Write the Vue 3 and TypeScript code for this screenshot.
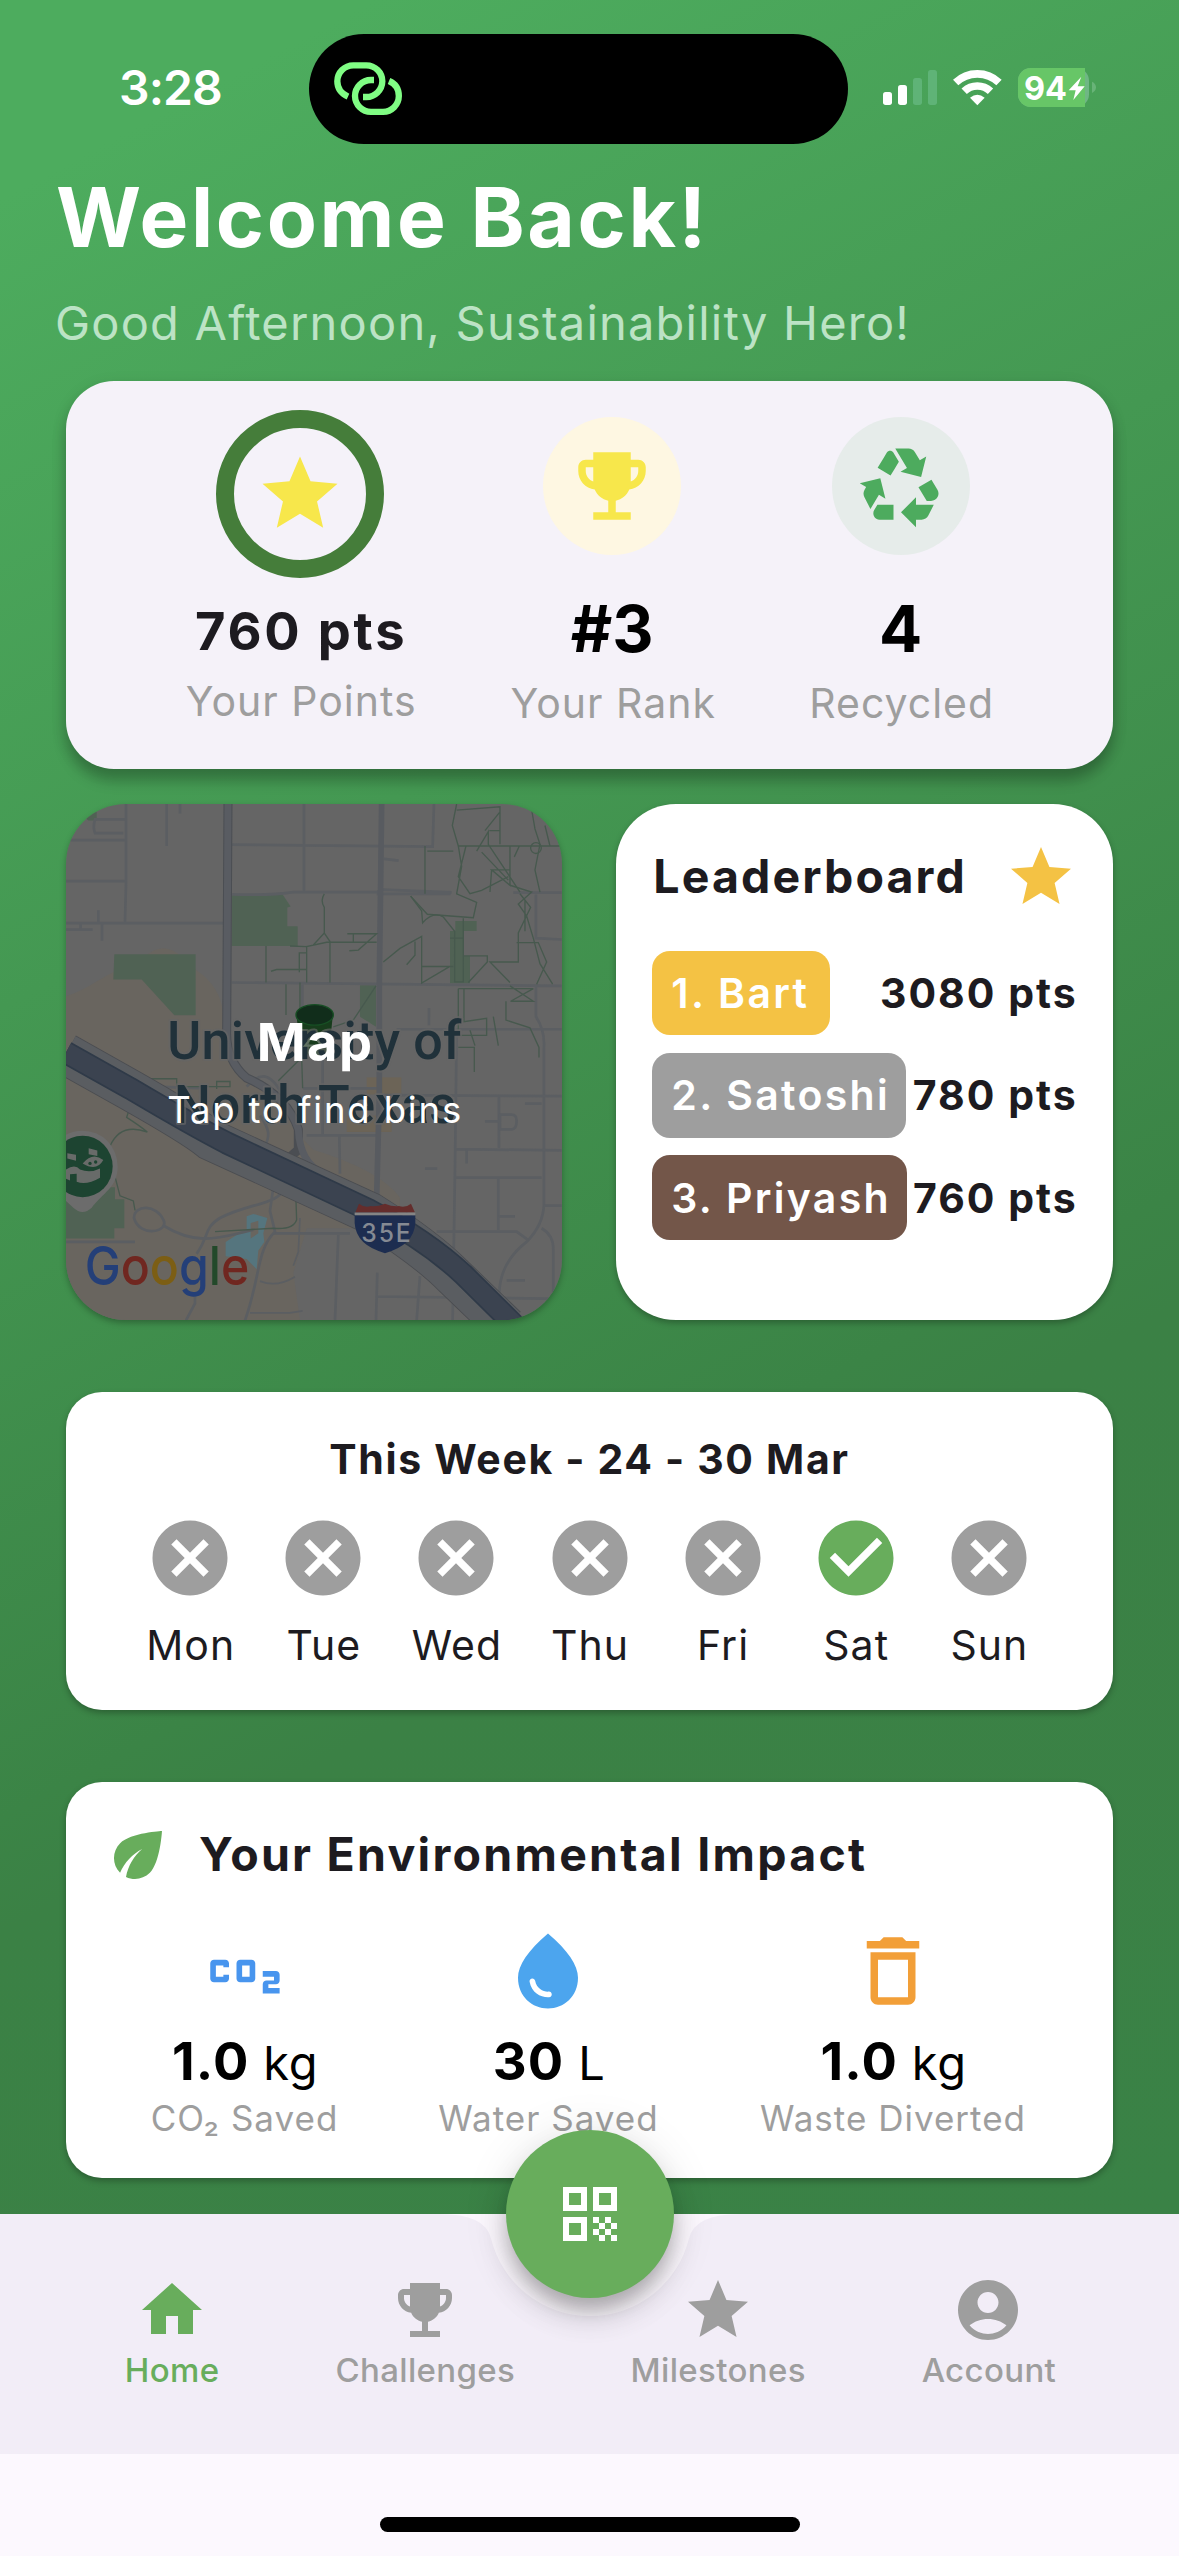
<script setup lang="ts">
interface Leader { label: string; points: string; color: string }
interface Day { name: string; done: boolean }
interface Tab { name: string; icon: string; active: boolean }

const icons = {
  star: 'M12 17.27L18.18 21l-1.64-7.03L22 9.24l-7.19-.61L12 2 9.19 8.63 2 9.24l5.46 4.73L5.82 21z',
  trophy: 'M19 5h-2V3H7v2H5c-1.1 0-2 .9-2 2v1c0 2.55 1.92 4.63 4.39 4.94.63 1.5 1.98 2.63 3.61 2.96V19H7v2h10v-2h-4v-3.1c1.63-.33 2.98-1.46 3.61-2.96C19.08 12.63 21 10.55 21 8V7c0-1.1-.9-2-2-2zM5 8V7h2v3.82C5.84 10.4 5 9.3 5 8zm14 0c0 1.3-.84 2.4-2 2.82V7h2v1z',
  recycling: 'M5.77 7.15L7.2 4.78l1.03-1.71c.39-.65 1.33-.65 1.72 0l1.48 2.46-1.23 2.06-1 1.62-3.43-2.06zm15.95 5.82l-1.6-2.66-3.46 2L18.87 16H20c.76 0 1.45-.43 1.79-1.11.14-.28.21-.58.21-.89 0-.36-.1-.71-.28-1.03zM16 21h1.5c.76 0 1.45-.43 1.79-1.11L20.74 17H16v-2l-4 4 4 4v-2zm-6-4H5.7l-.84 1.41c-.3.5-.32 1.12-.06 1.65.28.57.87.94 1.52.94H10v-4zm-3.88-2.65l1.73 1.04L6.48 9.9 1 11.27l1.7 1.02-.41.69c-.35.59-.38 1.31-.07 1.92l1.63 3.26 2.27-3.81zm10.9-9.21l-1.3-2.17C15.35 2.37 14.7 2 14 2h-3.53l3.12 5.2-1.72 1.03 5.49 1.37 1.37-5.49-1.71 1.03z',
  check: 'M12 2C6.48 2 2 6.48 2 12s4.48 10 10 10 10-4.48 10-10S17.52 2 12 2zm-2 15l-5-5 1.41-1.41L10 14.17l7.59-7.59L19 8l-9 9z',
  cancel: 'M12 2C6.47 2 2 6.47 2 12s4.47 10 10 10 10-4.47 10-10S17.53 2 12 2zm5 13.59L15.59 17 12 13.41 8.41 17 7 15.59 10.59 12 7 8.41 8.41 7 12 10.59 15.59 7 17 8.41 13.41 12 17 15.59z',
  eco: 'M6.05 8.05c-2.73 2.73-2.73 7.15-.02 9.88 1.47-3.4 4.09-6.24 7.36-7.93-2.77 2.34-4.71 5.61-5.39 9.32 2.6 1.23 5.8.78 7.95-1.37C19.43 14.47 20 4 20 4S9.53 4.57 6.05 8.05z',
  co2: 'M14 9h-3c-.55 0-1 .45-1 1v4c0 .55.45 1 1 1h3c.55 0 1-.45 1-1v-4c0-.55-.45-1-1-1zm-.5 4.5h-2v-3h2v3zM8 13v1c0 .55-.45 1-1 1H4c-.55 0-1-.45-1-1v-4c0-.55.45-1 1-1h3c.55 0 1 .45 1 1v1H6.5v-.5h-2v3h2V13H8zm12.5 2.5h-2v1h3V18H17v-2.5c0-.55.45-1 1-1h2v-1h-3V12h3.5c.55 0 1 .45 1 1v1.5c0 .55-.45 1-1 1z',
  water: 'M12 2c-5.33 4.55-8 8.48-8 11.8 0 4.98 3.8 8.2 8 8.2s8-3.22 8-8.2c0-3.32-2.67-7.25-8-11.8zM7.83 14c.37 0 .67.26.74.62.41 2.22 2.28 2.98 3.64 2.87.43-.02.79.32.79.75 0 .4-.32.73-.72.75-2.13.13-4.62-1.09-5.19-4.12-.08-.45.28-.87.74-.87z',
  bin: 'M6 19c0 1.1.9 2 2 2h8c1.1 0 2-.9 2-2V7H6v12zM8 9h8v10H8V9zm7.5-5l-1-1h-5l-1 1H5v2h14V4h-3.5z',
  qr: 'M3 11h8V3H3v8zm2-6h4v4H5V5zM3 21h8v-8H3v8zm2-6h4v4H5v-4zM13 3v8h8V3h-8zm6 6h-4V5h4v4zM19 19h2v2h-2zM13 13h2v2h-2zM15 15h2v2h-2zM13 17h2v2h-2zM15 19h2v2h-2zM17 17h2v2h-2zM17 13h2v2h-2zM19 15h2v2h-2z',
  home: 'M10 20v-6h4v6h5v-8h3L12 3 2 12h3v8z',
  account: 'M12 2C6.48 2 2 6.48 2 12s4.48 10 10 10 10-4.48 10-10S17.52 2 12 2zm0 4c1.93 0 3.5 1.57 3.5 3.5S13.93 13 12 13s-3.5-1.57-3.5-3.5S10.07 6 12 6zm0 14c-2.03 0-4.43-.82-6.14-2.88C7.55 15.8 9.68 15 12 15s4.45.8 6.14 2.12C16.43 19.18 14.03 20 12 20z',
}

const leaders: Leader[] = [
  { label: '1. Bart', points: '3080 pts', color: '#f4c244' },
  { label: '2. Satoshi', points: '780 pts', color: '#9e9e9e' },
  { label: '3. Priyash', points: '760 pts', color: '#735649' },
]

const days: Day[] = ['Mon', 'Tue', 'Wed', 'Thu', 'Fri', 'Sat', 'Sun'].map((name) => ({ name, done: name === 'Sat' }))

const tabs: Tab[] = [
  { name: 'Home', icon: icons.home, active: true },
  { name: 'Challenges', icon: icons.trophy, active: false },
  { name: 'Milestones', icon: icons.star, active: false },
  { name: 'Account', icon: icons.account, active: false },
]
</script>

<template>
  <div class="screen">
    <main class="body">
      <div class="status">
        <span class="time">3:28</span>
        <div class="island">
          <svg class="link" viewBox="102 126 204 159" fill="none" stroke="#80fd84" stroke-width="19">
            <path d="M144 230C124 221 112 204 112 184A48 48 0 0 1 160 136H199A48 48 0 0 1 247 184A48 48 0 0 1 199 231H189" />
            <path d="M222 180H213A48 48 0 0 0 165 228A48 48 0 0 0 213 275.500H249A48 48 0 0 0 296.500 228C296.500 208 286 191 267 183" />
          </svg>
        </div>
        <svg class="signals" viewBox="69 51 642 123">
          <rect x="69" y="126" width="27" height="39" rx="8" fill="#fff" />
          <rect x="114" y="105" width="27" height="60" rx="8" fill="#fff" />
          <rect x="159" y="84" width="27" height="81" rx="8" fill="#5fb377" />
          <rect x="204" y="60" width="27" height="105" rx="8" fill="#5fb377" />
          <g fill="none" stroke="#fff" stroke-width="23">
            <path d="M287 97.500A94 94 0 0 1 417 97.500" />
            <path d="M312.500 124A57 57 0 0 1 391.500 124" />
          </g>
          <path d="M330 143Q352 125 374 143L352 165.500Z" fill="#fff" />
          <rect x="474" y="54" width="213" height="117" rx="38" fill="#6fb784" />
          <path d="M512 54H675V171H512A38 38 0 0 1 474 133V92A38 38 0 0 1 512 54Z" fill="#67c667" />
          <path d="M696 95Q708 101 708 112T696 129Z" fill="#68b378" />
          <text x="492" y="149" class="battery-text" textLength="129" lengthAdjust="spacingAndGlyphs">94</text>
          <path d="M664 80L626 121H647L640 150L674 109H653Z" fill="#fff" />
        </svg>
      </div>

      <h1 class="welcome">Welcome Back!</h1>
      <p class="greeting">Good Afternoon, Sustainability Hero!</p>

      <section class="card stats">
        <div class="stat points">
          <div class="ring"><svg class="i90" viewBox="0 0 24 24" fill="#f7e74b"><path :d="icons.star" /></svg></div>
          <strong class="value small">760 pts</strong>
          <span class="label">Your Points</span>
        </div>
        <div class="stat">
          <div class="disc yellow"><svg class="i90" viewBox="0 0 24 24" fill="#f7e74b"><path :d="icons.trophy" /></svg></div>
          <strong class="value">#3</strong>
          <span class="label">Your Rank</span>
        </div>
        <div class="stat">
          <div class="disc mint"><svg class="i90" viewBox="0 0 24 24" fill="#4dab5e"><path :d="icons.recycling" /></svg></div>
          <strong class="value">4</strong>
          <span class="label">Recycled</span>
        </div>
      </section>

      <div class="pair">
        <section class="map">
          <svg class="map-art" viewBox="18 27 1489 1513" preserveAspectRatio="none">
            <rect x="18" y="27" width="1489" height="1513" fill="#656565" />
            <path fill="#69655f" d="M18 590C90 570 120 530 250 480Q310 420 370 480L410 515Q480 560 490 640V760L560 830L640 870L720 1000L760 1040Q960 1100 1020 1180V1270H740L700 1400L720 1540H18Z" />
            <g fill="#6c6457"><rect x="920" y="828" width="104" height="50" /><rect x="860" y="940" width="135" height="48" /></g>
            <g fill="#506254">
              <path d="M515 292H668L692 327L682 330V385H713V443H515Z" />
              <path d="M163 467H407V646H343L245 541H160Z" />
              <path d="M900 558H948V680L900 650Z" />
              <path d="M1186 370H1250V399H1210V472H1230V552H1170V399H1186Z" />
              <path d="M18 1150H165V1185H193V1270H163V1300H18Z" />
              <path d="M55 50H110V75H85Z" />
            </g>
            <path fill="#55757e" d="M497 1310L530 1290L560 1275V1235L580 1228L622 1240L610 1285L613 1310L595 1335L590 1390L560 1360L497 1352ZM572 1255V1300L595 1285V1248Z" fill-rule="evenodd" />
            <path d="M1225 1480L1242 1540" stroke="#55757e" stroke-width="14" />
            <g fill="none" stroke="#5b5e62" stroke-width="8">
              <path d="M198 27V260L195 372M18 133H200M18 253H195M18 376H490M200 72H105Q98 95 105 112H190M320 27V150M115 338V376M126 376V428M18 395H98M360 27V55M62 376V394" />
              <path d="M515 146L1118 152L1122 27M732 27V283M515 292Q640 295 700 285H950L970 278L1175 286M950 290H1172M515 550L1505 560M727 550V640M1428 560V650Q1455 690 1452 740V1200Q1450 1260 1400 1310Q1320 1370 1318 1460M1428 292V420L1505 424M1360 287H1505" />
              <path d="M1010 687H1505M1190 690L1185 1100L1178 1540M960 880L1505 883M740 998H955M838 998L840 1110M788 750V1000M730 860H950M1185 1038L1505 1042M1185 1122H1445M1317 883V1035M1315 1125V1275M1130 1280H1370L1405 1305M640 1285H870M835 1290L825 1540M948 1470L1505 1477M952 1400L948 1540M1080 1410L1070 1540M1445 1270Q1480 1290 1480 1330V1540" />
              <path d="M1320 937H1355Q1370 937 1370 955Q1370 980 1355 980H1320ZM1275 957H1320M1220 1040V1080M1395 905H1445M1317 1235H1365M1450 1204H1505M1095 1095H1132M972 188L1016 193M1107 625V675M1340 1423H1395" />
              <path d="M222 1240C222 1200 290 1200 310 1245C330 1280 240 1300 222 1240ZM310 1262C420 1330 500 1290 580 1275M410 1345C450 1290 430 1270 480 1240C560 1200 640 1200 665 1165M640 1150L630 1220L645 1280C590 1330 600 1420 555 1540M18 1310H225M378 1540L405 1490V1460M560 855C610 800 640 830 665 875L640 900M600 940C630 980 630 1000 615 1030M280 855L440 860" />
              <path d="M720 1240L715 1340L700 1380M600 1425Q650 1445 705 1412M570 1518H690L728 1512" stroke-width="5" />
            </g>
            <g fill="none" stroke="#585b60" stroke-width="17"><path d="M965 27L958 560V880L950 1180" /></g>
            <path d="M504 27L500 700Q500 780 560 830Q680 880 715 980V1040L680 1070" fill="none" stroke="#4b4e53" stroke-width="27" />
            <path d="M504 27L500 700Q500 780 560 830Q680 880 715 980Q720 1080 790 1110" fill="none" stroke="#595c62" stroke-width="21" />
            <g fill="none" stroke="#47594e" stroke-width="4">
              <path d="M793 290Q780 310 793 330V405L760 440M793 405L810 430V550M740 550V445L800 432H950M862 407H950L895 455L868 457M880 407V430M633 517L650 512H738M618 443V550M718 520V463H738M678 555V645M690 443L740 445M948 560L880 660L820 680M720 640V550" />
              <path d="M1190 27L1177 90L1195 150L1205 210L1190 290L1250 315L1240 360L1102 350L1052 297M1190 45L1320 35V145M1275 105L1320 50M1195 150H1505M1250 165L1285 108V145L1380 285M1288 105H1320M1218 150L1195 240L1230 290L1265 280L1345 240M1350 150V265L1295 220H1350M1295 220L1290 285M1265 168L1345 250M1412 27L1425 100L1440 145L1425 220L1440 285M1455 90L1470 150M1378 150L1363 182" />
              <circle cx="1428" cy="156" r="16" />
              <path d="M1350 265L1415 285L1375 320L1400 355L1420 420L1440 495L1478 555M1380 290L1412 330L1375 405V490H1290L1350 550M1395 310V400M1370 433H1435L1460 490L1430 555M1095 150V290M1052 297L1085 340L1088 375Q1120 340 1150 358L1184 400V548H1210V362M1170 420H1210M1210 472H1282V490L1225 550M1170 503L1085 552V415L1020 450L970 490M1085 503H1180M1040 498L1065 470V430M1195 568H1420L1352 605H1420L1350 560M1195 568V690M1212 568V665L1280 655V705H1200M1338 605V660L1410 683L1437 740V770M1195 740H1243V812M1230 690L1245 735M1300 650L1315 735M1102 165H1180" />
              <path d="M150 1030Q180 960 262 988Q240 970 200 945L205 930M160 1100L180 1175L220 1190L225 1218M465 1280L640 1270Q700 1275 710 1245L708 1190M260 832H350V855H510V840H470V862M655 838L725 770L728 860" />
            </g>
            <path d="M18 760L210 865Q400 970 450 1010L930 1225Q1100 1330 1180 1410L1340 1560" fill="none" stroke="#4b4d51" stroke-width="124" />
            <path d="M18 760L210 865Q400 970 450 1010L930 1225Q1100 1330 1180 1410L1340 1560" fill="none" stroke="#5a5d61" stroke-width="119" />
            <path d="M18 755L210 860Q400 970 500 1020L930 1218Q1100 1305 1210 1405L1370 1560" fill="none" stroke="#2f3a48" stroke-width="68" />
            <path d="M18 755L210 860Q400 970 500 1020L930 1218Q1100 1305 1210 1405L1370 1560" fill="none" stroke="#3b4350" stroke-width="58" />
            <path d="M710 650H818L808 750Q765 780 722 750Z" fill="#173c1c" />
            <ellipse cx="764" cy="645" rx="56" ry="30" fill="#112d1b" stroke="#174e24" stroke-width="4" />
            <g class="place" fill="#20313a" stroke="#656565" stroke-opacity=".7" stroke-width="12" paint-order="stroke" stroke-linejoin="round">
              <text x="322" y="773" textLength="882">University of</text>
              <text x="342" y="963" textLength="846">North Texas</text>
            </g>
            <path d="M735 735L760 705L785 735Z" fill="none" stroke="#5f7162" stroke-width="6" />
            <path d="M68 984A105 105 0 0 1 173 1089C173 1150 130 1165 95 1210Q68 1235 40 1210L18 1190V996Q40 984 68 984Z" fill="#6c6c6c" />
            <circle cx="68" cy="1089" r="90" fill="#1d4431" />
            <path d="M18 1098Q45 1080 60 1098Q90 1110 120 1095V1122Q80 1145 50 1134V1110L30 1112V1130L18 1125Z" fill="#686b69" />
            <path d="M68 1080Q98 1045 130 1070Q110 1105 68 1080ZM22 1050L48 1055V1072L22 1066ZM86 1036L112 1042V1058L86 1053Z" fill="#686b69" />
            <g fill="#1d4431"><circle cx="90" cy="1080" r="5" /><circle cx="107" cy="1076" r="5" /></g>
            <path d="M884 1232H1066V1255Q1062 1320 975 1343Q888 1320 884 1255Z" fill="#1d2d50" />
            <path d="M897 1198Q915 1212 933 1205Q950 1208 975 1198Q1000 1208 1017 1205Q1035 1212 1053 1198L1065 1224H886Z" fill="#642d2c" />
            <rect x="884" y="1224" width="182" height="8" fill="#858585" />
            <text x="904" y="1310" class="route" textLength="148">35E</text>
            <text x="74" y="1436" class="google" textLength="494" lengthAdjust="spacingAndGlyphs"><tspan fill="#243f78">G</tspan><tspan fill="#702720">o</tspan><tspan fill="#7c5e14">o</tspan><tspan fill="#243f78">g</tspan><tspan fill="#23492a">l</tspan><tspan fill="#702720">e</tspan></text>
          </svg>
          <div class="map-caption">
            <strong>Map</strong>
            <span>Tap to find bins</span>
          </div>
        </section>

        <section class="card leaderboard">
          <header>
            <h2>Leaderboard</h2>
            <svg class="i72" viewBox="0 0 24 24" fill="#f4c244"><path :d="icons.star" /></svg>
          </header>
          <ul>
            <li v-for="l in leaders" :key="l.label">
              <span class="badge" :style="{ background: l.color }">{{ l.label }}</span>
              <span class="pts">{{ l.points }}</span>
            </li>
          </ul>
        </section>
      </div>

      <section class="card week">
        <h3>This Week - 24 - 30 Mar</h3>
        <div class="days">
          <div v-for="d in days" :key="d.name" class="day">
            <svg class="i90" viewBox="0 0 24 24" :fill="d.done ? '#68ad5c' : '#9e9e9e'"><path :d="d.done ? icons.check : icons.cancel" /></svg>
            <span>{{ d.name }}</span>
          </div>
        </div>
      </section>

      <section class="card impact">
        <header>
          <svg class="i72" viewBox="0 0 24 24" fill="#68ad5c"><path :d="icons.eco" /></svg>
          <h2>Your Environmental Impact</h2>
        </header>
        <div class="metrics">
          <div class="metric">
            <svg class="i90" viewBox="0 0 24 24" fill="#4895ee"><path :d="icons.co2" /></svg>
            <p><b>1.0</b> kg</p>
            <span>CO₂ Saved</span>
          </div>
          <div class="metric">
            <svg class="i90" viewBox="0 0 24 24" fill="#4ca5ee"><path :d="icons.water" /></svg>
            <p><b>30</b> L</p>
            <span>Water Saved</span>
          </div>
          <div class="metric">
            <svg class="i90" viewBox="0 0 24 24" fill="#f29f38"><path :d="icons.bin" /></svg>
            <p><b>1.0</b> kg</p>
            <span>Waste Diverted</span>
          </div>
        </div>
      </section>
    </main>

    <nav class="tabs">
      <svg class="notch" viewBox="-150 0 300 103">
        <path d="M-150 0Q-105 0 -99.090 24.200A102 102 0 0 0 99.090 24.200Q105 0 150 0Z" fill="#fcf8fe" />
      </svg>
      <div v-for="t in tabs" :key="t.name" class="tab" :class="{ active: t.active }">
        <svg class="i72" viewBox="0 0 24 24" fill="currentColor"><path :d="t.icon" /></svg>
        <span>{{ t.name }}</span>
      </div>
      <button class="fab" type="button" aria-label="Scan">
        <svg class="i72" viewBox="0 0 24 24" fill="#fff"><path :d="icons.qr" /></svg>
      </button>
    </nav>
    <footer class="bottom"><div class="indicator"></div></footer>
  </div>
</template>

<style>
body { margin: 0; }
</style>

<style scoped>
* { box-sizing: border-box; margin: 0; padding: 0; }
.screen {
  width: 1179px; height: 2556px; overflow: hidden; display: flex; flex-direction: column;
  font-family: Inter, "Liberation Sans", sans-serif; color: #1d1b20; background: #fcf8fe;
}
svg { display: block; flex: none; }
.i90 { width: 90px; height: 90px; }
.i72 { width: 72px; height: 72px; }
.body { height: 2214px; flex: none; background: linear-gradient(151.96deg, #4dac5e 0%, #4dac5e 7%, #3b8446 64%, #3b8145 68%, #3a8246 100%); }

.status { display: flex; align-items: flex-start; height: 167.500px; padding: 33.700px 0 0 119px; }
.time { width: 190.300px; padding-top: 24px; font-size: 48px; line-height: 60px; font-weight: 600; color: #fff; letter-spacing: -.900px; }
.island { width: 538.700px; height: 110.600px; border-radius: 56px; background: #000; padding: 28.300px 0 0 24.700px; }
.link { width: 68px; height: 53px; }
.signals { width: 214px; height: 41px; margin: 33.300px 0 0 35px; }
.battery-text { font: 700 99px Inter, sans-serif; fill: #fff; }

.welcome { margin-left: 56px; font-size: 82px; line-height: 100px; font-weight: 700; color: #fff; letter-spacing: 2.600px; white-space: nowrap; }
.greeting { margin: 25.500px 0 0 55px; font-size: 47px; line-height: 60px; color: #bce3c5; letter-spacing: 1.220px; font-weight: 400; white-space: nowrap; }

.card { margin-left: 66px; width: 1047px; background: #fff; box-shadow: 0 3px 6px rgba(0, 0, 0, .28); }
.stats {
  margin-top: 28px; height: 387.500px; border-radius: 48px; background: #f5f2f9; display: flex; padding-left: 78.200px;
  box-shadow: 0 12px 14px rgba(0, 0, 0, .22), 0 4px 16px rgba(0, 0, 0, .1);
}
.stat { width: 312px; padding-top: 36.300px; display: flex; flex-direction: column; align-items: center; }
.stat:last-child { width: 265px; }
.points { padding-top: 29px; }
.ring { width: 168px; height: 168px; border: 18px solid #457d3a; border-radius: 50%; display: flex; align-items: center; justify-content: center; }
.disc { width: 138px; height: 138px; border-radius: 50%; display: flex; align-items: center; justify-content: center; }
.yellow { background: #fef7e2; }
.mint { background: #e6ecea; }
.value { margin-top: 38.700px; font-size: 64px; line-height: 70px; font-weight: 700; color: #000; }
.value.small { margin-top: 23px; padding-left: 2px; font-size: 52.500px; line-height: 60px; color: #1d1b20; letter-spacing: 2.800px; }
.label { margin-top: 14px; padding-left: 2px; font-size: 41px; line-height: 50px; color: #9e9e9e; letter-spacing: 1px; white-space: nowrap; }
.points .label { margin-top: 15px; }

.pair { display: flex; gap: 54px; margin: 35.500px 0 0 66px; height: 516.400px; }
.map { position: relative; width: 496.300px; height: 516.400px; border-radius: 60px; overflow: hidden; box-shadow: 0 3px 6px rgba(0, 0, 0, .28); }
.map-art { width: 100%; height: 100%; }
.place { font: 500 156px Roboto, sans-serif; }
.route { font: 500 74px Inter, sans-serif; fill: #858a93; }
.google { font: 500 158px Inter, sans-serif; stroke: none; }
.map-caption { position: absolute; inset: 0; padding-top: 207.700px; display: flex; flex-direction: column; align-items: center; color: #fff; }
.map-caption strong { padding-left: 2px; font-size: 52.500px; line-height: 60px; font-weight: 700; letter-spacing: 1.500px; }
.map-caption span { margin-top: 16.400px; padding-left: 2px; font-size: 36.500px; line-height: 44px; letter-spacing: 1.850px; }

.leaderboard { margin: 0; width: 496.400px; border-radius: 60px; padding: 37px 36px 0; }
.leaderboard header { display: flex; justify-content: space-between; align-items: center; height: 72px; }
.leaderboard h2 { letter-spacing: 2.100px; }
h2 { font-size: 46.500px; line-height: 60px; font-weight: 700; letter-spacing: 2.250px; padding: 0 0 2px 1px; white-space: nowrap; }
ul { list-style: none; margin-top: 38px; display: flex; flex-direction: column; gap: 17.800px; }
li { display: flex; justify-content: space-between; align-items: center; height: 84.400px; font-size: 41px; line-height: 50px; white-space: nowrap; }
.badge { display: flex; align-items: center; min-width: 177.500px; height: 84.400px; padding: 0 16px 0 19px; border-radius: 18px; color: #fff; font-weight: 600; letter-spacing: 2.300px; }
.pts { font-weight: 700; letter-spacing: 2px; margin-right: -1px; }

.week { margin-top: 71.700px; height: 318.400px; border-radius: 36px; padding-top: 42px; text-align: center; }
h3 { font-size: 41px; line-height: 50px; font-weight: 700; letter-spacing: 1.650px; }
.days { display: flex; justify-content: center; margin-top: 28.600px; }
.day { width: 133.100px; display: flex; flex-direction: column; align-items: center; }
.day span { margin-top: 17px; padding-left: 1px; font-size: 41px; line-height: 50px; letter-spacing: 1px; }

.impact { margin-top: 71.600px; height: 396px; border-radius: 36px; padding-top: 36.700px; }
.impact header { display: flex; align-items: center; gap: 24px; height: 72px; padding-left: 36px; }
.metrics { display: flex; margin-top: 35.600px; padding-left: 26px; }
.metric { width: 304px; display: flex; flex-direction: column; align-items: center; }
.metric:last-child { width: 385px; }
.metric p { margin-top: 14.300px; padding-left: 2px; height: 60px; font-size: 47px; line-height: 60px; color: #000; white-space: nowrap; letter-spacing: .600px; }
.metric b { font-size: 52.500px; font-weight: 700; line-height: 60px; letter-spacing: 1.200px; }
.metric span { margin-top: 5px; padding-left: 1px; font-size: 35px; line-height: 44px; color: #9e9e9e; letter-spacing: 1px; white-space: nowrap; }

.tabs { position: relative; height: 240px; flex: none; background: #f2edf7; display: flex; padding: 60px 0 0 45px; }
.notch { position: absolute; left: 439.500px; top: 0; width: 300px; height: 103px; }
.tab { width: 253.200px; display: flex; flex-direction: column; align-items: center; color: #9e9e9e; }
.tab:nth-of-type(3) { margin-left: 31px; }
.tab:nth-of-type(n + 3) { width: 270.700px; }
.tab span { margin-top: 4px; padding-left: 1px; font-size: 33px; line-height: 40px; font-weight: 500; letter-spacing: .350px; }
.tab.active { color: #68ad5c; }
.fab {
  position: absolute; left: 505.500px; top: -84px; width: 168px; height: 168px; border: 0; border-radius: 50%; background: #68ad5c;
  display: flex; align-items: center; justify-content: center;
  box-shadow: 0 14px 16px -3px rgba(0, 0, 0, .16), 0 18px 30px rgba(0, 0, 0, .15), 0 3px 48px rgba(0, 0, 0, .1);
}
.bottom { flex: 1; display: flex; justify-content: center; padding-top: 63px; }
.indicator { width: 420px; height: 15px; border-radius: 8px; background: #000; }
</style>
